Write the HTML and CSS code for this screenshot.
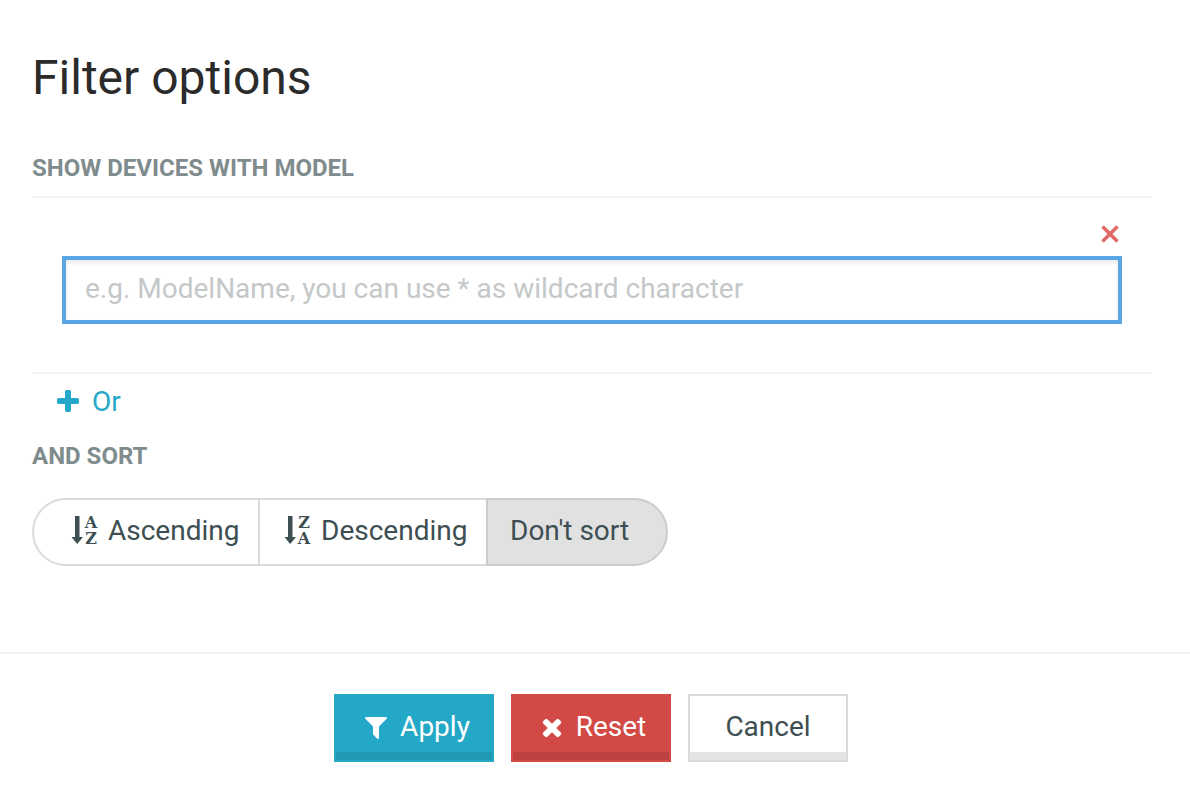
FILE: index.html
```html
<!DOCTYPE html>
<html lang="en">
<head>
<meta charset="utf-8">
<title>Filter options</title>
<link rel="stylesheet" href="styles.css">
</head>
<body>
<form class="dialog">
  <div class="body">
    <h1 class="title">Filter options</h1>
    <h2 class="heading"><label for="model">Show devices with model</label></h2>
    <div class="rule-box">
      <button class="remove" type="button" aria-label="Remove">
        <svg width="18" height="18" viewBox="0 0 18 18" aria-hidden="true"><path d="M1.5 1.5 16.500 16.500M16.500 1.500 1.500 16.500" fill="none" stroke="currentColor" stroke-width="3.6"/></svg>
      </button>
      <input class="field" id="model" type="text" placeholder="e.g. ModelName, you can use * as wildcard character">
    </div>
    <button class="add" type="button">
      <svg class="icon" viewBox="0 0 1792 1792" aria-hidden="true"><path d="M1600 736v192q0 40-28 68t-68 28h-416v416q0 40-28 68t-68 28h-192q-40 0-68-28t-28-68v-416h-416q-40 0-68-28t-28-68v-192q0-40 28-68t68-28h416v-416q0-40 28-68t68-28h192q40 0 68 28t28 68v416h416q40 0 68 28t28 68z"/></svg>
      <span>Or</span>
    </button>
    <h2 class="heading">And sort</h2>
    <div class="sort">
      <button class="option option-first" type="button">
        <svg class="sort-icon" viewBox="0 0 28 38" aria-hidden="true"><path d="M4 4h4.500v21h3.500L6.200 32 .5 25H4z"/><text x="20" y="16" text-anchor="middle">A</text><text x="20" y="32" text-anchor="middle">Z</text></svg>
        <span>Ascending</span>
      </button>
      <button class="option option-middle" type="button">
        <svg class="sort-icon" viewBox="0 0 28 38" aria-hidden="true"><path d="M4 4h4.500v21h3.500L6.200 32 .5 25H4z"/><text x="20" y="16" text-anchor="middle">Z</text><text x="20" y="32" text-anchor="middle">A</text></svg>
        <span>Descending</span>
      </button>
      <button class="option option-last" type="button" aria-pressed="true"><span>Don't sort</span></button>
    </div>
  </div>
  <div class="footer">
    <button class="btn btn-apply" type="button">
      <svg class="icon" viewBox="0 0 1792 1792" aria-hidden="true"><path d="M1595 295q17 41-14 70l-493 493v742q0 42-39 59-13 5-25 5-27 0-45-19l-256-256q-19-19-19-45v-486l-493-493q-31-29-14-70 17-39 59-39h1280q42 0 59 39z"/></svg>
      <span>Apply</span>
    </button>
    <button class="btn btn-reset" type="button">
      <svg class="icon" viewBox="0 0 1792 1792" aria-hidden="true"><path d="M1490 1322q0 40-28 68l-136 136q-28 28-68 28t-68-28l-294-294-294 294q-28 28-68 28t-68-28l-136-136q-28-28-28-68t28-68l294-294-294-294q-28-28-28-68t28-68l136-136q28-28 68-28t68 28l294 294 294-294q28-28 68-28t68 28l136 136q28 28 28 68t-28 68l-294 294 294 294q28 28 28 68z"/></svg>
      <span>Reset</span>
    </button>
    <button class="btn btn-cancel" type="button"><span>Cancel</span></button>
  </div>
</form>
</body>
</html>
```
FILE: styles.css
```css
* { box-sizing: border-box; }
body {
  margin: 0;
  background: #fff;
  color: #3d4f52;
  font: 28px/32px Roboto, "Liberation Sans", sans-serif;
}
button, input { font: inherit; color: inherit; border-radius: 0; }
button { display: flex; align-items: center; cursor: pointer; }
svg { display: block; fill: currentColor; flex: none; }
.body { padding: 48px 38px 86px 32px; }
.title {
  margin: 0 0 44px;
  color: #2b2b2b;
  font-size: 48px;
  line-height: 60px;
  font-weight: 400;
}
.heading {
  margin: 0;
  color: #7f8c8d;
  font-size: 24px;
  line-height: 32px;
  font-weight: 700;
  text-transform: uppercase;
}
.rule-box {
  display: flex;
  flex-direction: column;
  margin-top: 12px;
  padding: 27px 30px 48px;
  border-top: 2px solid #f5f5f5;
  border-bottom: 2px solid #f5f5f5;
}
.remove {
  align-self: flex-end;
  margin: 0 3px 13px 0;
  padding: 0;
  border: 0;
  background: none;
  color: #e06a68;
}
.field {
  width: 100%;
  height: 68px;
  padding: 0 20px 4px 19px;
  border: 4px solid #5aa5e6;
  outline: 0;
  background: #fff;
  box-shadow: inset 0 3px 4px rgba(0, 0, 0, .08);
}
.field::placeholder { color: #c4c8c9; opacity: 1; }
.icon { width: 28px; height: 28px; }
.add {
  gap: 10px;
  margin: 12px 0 22px 22px;
  padding: 0;
  border: 0;
  background: none;
  color: #23a9c7;
}
.sort { display: flex; margin-top: 26px; }
.option {
  gap: 9px;
  height: 68px;
  padding: 0 18px 2px;
  border: 2px solid #d7dcdb;
  background: #fff;
}
.option-first { min-width: 228px; padding-left: 37px; border-radius: 34px 0 0 34px; }
.option-middle { min-width: 230px; margin-left: -2px; padding-left: 24px; }
.option-last {
  min-width: 182px;
  margin-left: -2px;
  padding-left: 22px;
  border-color: #cccccc;
  border-radius: 0 34px 34px 0;
  background: #e1e1e1;
}
.sort-icon {
  width: 28px;
  height: 38px;
  font: bold 16px "DejaVu Serif", serif;
}
.footer {
  display: flex;
  justify-content: center;
  gap: 17px;
  padding: 40px 8px 32px 0;
  border-top: 2px solid #f0f0f0;
}
.btn {
  justify-content: center;
  gap: 10px;
  width: 160px;
  height: 68px;
  padding: 0 0 2px;
  border: 2px solid;
}
.btn-apply {
  padding-left: 4px;
  border-color: #23a9c7;
  background: #23a9c7;
  box-shadow: inset 0 -8px #2198b4;
  color: #fff;
}
.btn-reset {
  padding-left: 2px;
  border-color: #d34946;
  background: #d34946;
  box-shadow: inset 0 -8px #bd423f;
  color: #fff;
}
.btn-cancel {
  border-color: #d7dcdb;
  background: #fff;
  box-shadow: inset 0 -8px #e4e4e4;
}
```
